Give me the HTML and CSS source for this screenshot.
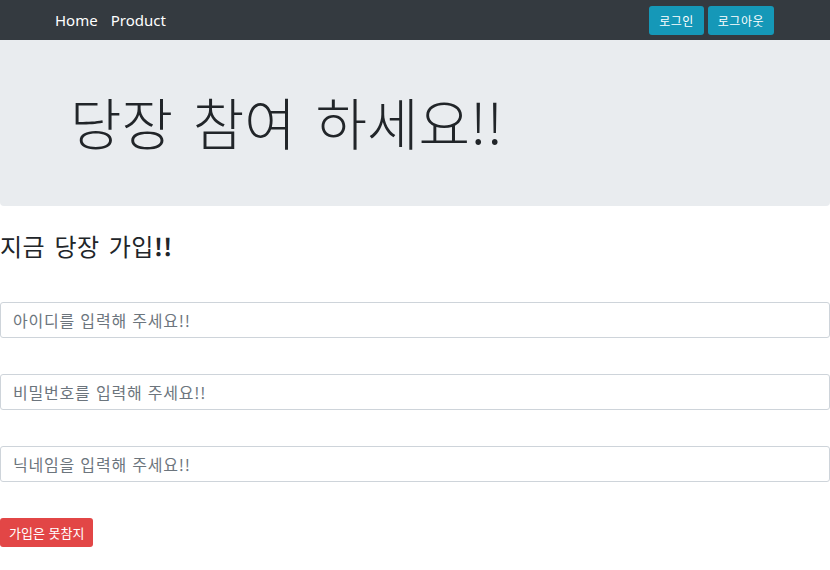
FILE: index.html
```html
<!DOCTYPE html>
<html lang="ko">
<head>
    <meta charset="UTF-8">
    <title>가입</title>
    <link rel="stylesheet" href="styles.css">
</head>
<body>

    <nav class="navbar">
        <div class="links">
            <a href="#">Home</a>
            <a href="#">Product</a>
        </div>
        <div class="auth">
            <button class="btn-info">로그인</button>
            <button class="btn-info">로그아웃</button>
        </div>
    </nav>

    <div class="jumbotron">
        <h1>당장 참여 하세요!!</h1>
    </div>

    <h2 class="join-title">지금 당장 가입<b>!!</b></h2>

    <form class="join-form">
        <input type="text" placeholder="아이디를 입력해 주세요!!">
        <input type="password" placeholder="비밀번호를 입력해 주세요!!">
        <input type="text" placeholder="닉네임을 입력해 주세요!!">
        <div><button type="submit" class="btn-danger">가입은 못참지</button></div>
    </form>

</body>
</html>
```

FILE: styles.css
```css
body { font-family: "Noto Sans", "Noto Sans CJK KR", sans-serif; margin: 0; padding: 0; background: white; color: #212529; }
.navbar { display: flex; justify-content: space-between; align-items: center; background-color: #343a40; height: 40px; padding: 0 56px 0 55px; box-sizing: border-box; }
.navbar .links { display: flex; gap: 13px; }
.navbar a { color: white; text-decoration: none; font-size: 15px; }
.auth { display: flex; gap: 4px; }
.btn-info { background-color: #1598b8; color: white; border: none; border-radius: 3px; font-family: "Noto Sans CJK KR", sans-serif; font-size: 12px; letter-spacing: 0.5px; height: 29px; padding: 0 10px; }
.jumbotron { background-color: #e9ecef; height: 166px; border-radius: 0 0 4px 4px; display: flex; align-items: center; padding-left: 70px; }
.jumbotron h1 { margin: 0; font-family: "Noto Sans CJK KR", sans-serif; font-weight: 300; font-size: 56px; word-spacing: 4px; line-height: 1; padding-bottom: 4px; }
.join-title { font-family: "Noto Sans CJK KR", sans-serif; font-weight: 400; font-size: 24px; letter-spacing: 0.5px; word-spacing: 2px; margin: 24px 0 40px; line-height: 32px; }
.join-form { display: flex; flex-direction: column; gap: 36px; }
.join-form input { height: 36px; box-sizing: border-box; width: 100%; border: 1px solid #ced4da; border-radius: 3px; padding: 0 12px; font-family: "Noto Sans CJK KR", sans-serif; font-size: 16px; letter-spacing: 0.8px; }
.join-form input::placeholder { color: #6c757d; }
.btn-danger { background-color: #e24646; color: white; border: none; border-radius: 3px; font-family: "Noto Sans CJK KR", sans-serif; font-size: 13px; height: 29px; padding: 0 9px; }
```
